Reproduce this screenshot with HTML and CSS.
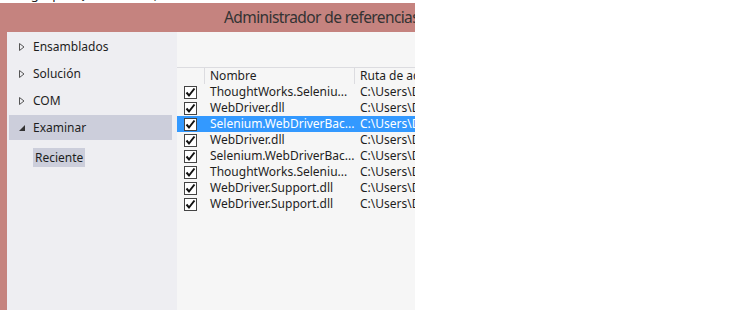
FILE: index.html
```html
<!DOCTYPE html>
<html lang="es">
<head>
    <meta charset="UTF-8">
    <title>Administrador de referencias</title>
    <link rel="stylesheet" href="styles.css">
</head>
<body>
    <div class="top-strip"><span>using OpenQA.Selenium;</span></div>
    <div class="window">
        <div class="titlebar">Administrador de referencias</div>
        <div class="content">
            <ul class="nav">
                <li class="nav-item"><svg class="arrow" width="6" height="8" viewBox="0 0 6 8"><path d="M0.5 0.5 L5 4 L0.5 7.5 Z" fill="none" stroke="#555" stroke-width="1"/></svg>Ensamblados</li>
                <li class="nav-item"><svg class="arrow" width="6" height="8" viewBox="0 0 6 8"><path d="M0.5 0.5 L5 4 L0.5 7.5 Z" fill="none" stroke="#555" stroke-width="1"/></svg>Solución</li>
                <li class="nav-item"><svg class="arrow" width="6" height="8" viewBox="0 0 6 8"><path d="M0.5 0.5 L5 4 L0.5 7.5 Z" fill="none" stroke="#555" stroke-width="1"/></svg>COM</li>
                <li class="nav-item active"><svg class="arrow" width="6" height="8" viewBox="0 0 6 8"><path d="M6 1 L6 7 L0 7 Z" fill="#333"/></svg>Examinar</li>
                <li class="nav-sub"><span>Reciente</span></li>
            </ul>
            <section class="main">
                <div class="grid">
                    <div class="row head">
                        <span class="c-check"></span>
                        <span class="c-name">Nombre</span>
                        <span class="c-path">Ruta de acceso</span>
                    </div>
                    <div class="row"><span class="c-check"><i class="box"></i></span><span class="c-name">ThoughtWorks.Seleniu...</span><span class="c-path">C:\Users\David</span></div>
                    <div class="row"><span class="c-check"><i class="box"></i></span><span class="c-name">WebDriver.dll</span><span class="c-path">C:\Users\David</span></div>
                    <div class="row selected"><span class="c-check"><i class="box"></i></span><span class="c-name">Selenium.WebDriverBac...</span><span class="c-path">C:\Users\David</span></div>
                    <div class="row"><span class="c-check"><i class="box"></i></span><span class="c-name">WebDriver.dll</span><span class="c-path">C:\Users\David</span></div>
                    <div class="row"><span class="c-check"><i class="box"></i></span><span class="c-name">Selenium.WebDriverBac...</span><span class="c-path">C:\Users\David</span></div>
                    <div class="row"><span class="c-check"><i class="box"></i></span><span class="c-name">ThoughtWorks.Seleniu...</span><span class="c-path">C:\Users\David</span></div>
                    <div class="row"><span class="c-check"><i class="box"></i></span><span class="c-name">WebDriver.Support.dll</span><span class="c-path">C:\Users\David</span></div>
                    <div class="row"><span class="c-check"><i class="box"></i></span><span class="c-name">WebDriver.Support.dll</span><span class="c-path">C:\Users\David</span></div>
                </div>
            </section>
        </div>
    </div>
</body>
</html>
```

FILE: styles.css
```css
*{
    margin: 0;
    padding: 0;
    box-sizing: border-box;
}
body{
    background: #ffffff;
    font-family: "Noto Sans", "Open Sans", sans-serif;
    font-size: 12px;
    color: #1e1e1e;
    width: 731px;
    height: 310px;
    overflow: hidden;
}
ul{
    list-style: none;
}
.top-strip{
    height: 3px;
    overflow: hidden;
    padding-left: 5px;
}
.top-strip span{
    display: block;
    font-size: 13px;
    line-height: 13px;
    margin-top: -12px;
    color: #222;
}
.window{
    width: 415px;
    height: 307px;
    background: #c5837f;
    padding-left: 7px;
    display: flex;
    flex-direction: column;
}
.titlebar{
    height: 29px;
    line-height: 28px;
    padding-left: 217px;
    font-size: 15.5px;
    letter-spacing: -0.6px;
    color: #333;
    white-space: nowrap;
    overflow: hidden;
}
.content{
    flex: 1;
    display: flex;
    overflow: hidden;
}
.nav{
    width: 170px;
    background: #eeeef2;
    padding: 2px 5px 0 2px;
}
.nav-item{
    height: 25px;
    margin-bottom: 2px;
    display: flex;
    align-items: center;
    padding-left: 10px;
}
.nav-item .arrow{
    margin-right: 8px;
}
.nav-item.active{
    background: #cccedb;
}
.nav-sub{
    padding: 6px 0 0 24px;
}
.nav-sub span{
    display: inline-block;
    background: #cccedb;
    height: 19px;
    line-height: 19px;
    padding: 0 2px;
}
.main{
    flex: 1;
    background: #f6f6f6;
    padding-top: 35px;
    overflow: hidden;
}
.row{
    display: flex;
    height: 16px;
    line-height: 16px;
    white-space: nowrap;
}
.row.head{
    border-top: 1px solid #dcdce0;
    height: 17px;
}
.row.head span{
    border-right: 1px solid #dcdce0;
}
.c-check{
    width: 28px;
    flex: none;
    padding-left: 7px;
    display: flex;
    align-items: center;
}
.c-name{
    width: 150px;
    flex: none;
    padding-left: 5px;
}
.c-path{
    flex: 1;
    padding-left: 5px;
}
.row.selected{
    background: #3399ff;
    color: #ffffff;
}
.box{
    display: block;
    width: 13px;
    height: 13px;
    border: 1px solid #444;
    background: #fff url("data:image/svg+xml;utf8,<svg xmlns='http://www.w3.org/2000/svg' width='11' height='11' viewBox='0 0 11 11'><path d='M1.5 5.5 L4 8.5 L9.5 1.5' fill='none' stroke='%23111' stroke-width='2'/></svg>") no-repeat center;
}
```
